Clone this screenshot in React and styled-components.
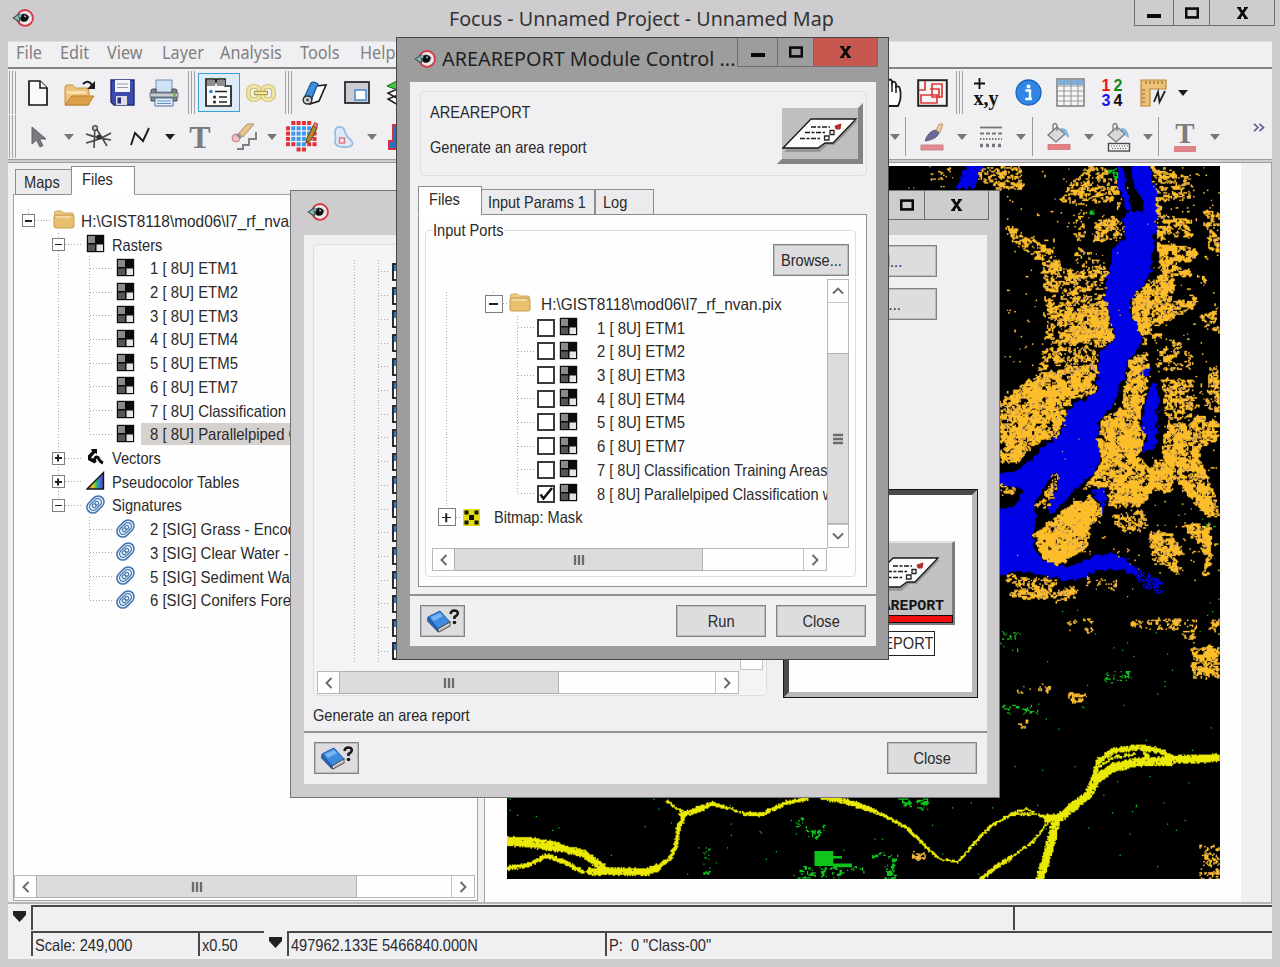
import React from 'react';
import styled, { createGlobalStyle, css } from 'styled-components';

const FACE = '#f0eff1';
const FRAME = '#cecccf';
const PITCH = 23.72;

const Global = createGlobalStyle`
  * { box-sizing: border-box; }
  body { margin: 0; background: ${FRAME}; overflow: hidden; }
  svg { display: block; flex: none; }
`;

/* ---------- basics ---------- */

const Label = styled.span`
  display: inline-block;
  white-space: pre;
  font-family: "Liberation Sans", Arial, sans-serif;
  font-size: 16.5px;
  line-height: 20px;
  color: #2a2a2a;
  transform: scaleX(${p => p.$sx || 0.885});
  transform-origin: ${p => p.$origin || 'left'} center;
`;

const UiLabel = styled(Label)`
  font-family: "Noto Sans", "Open Sans", sans-serif;
  font-size: ${p => p.$size || 17}px;
  color: ${p => p.$color || '#333'};
`;

const Desktop = styled.div`
  position: relative;
  width: 1280px;
  height: 967px;
  overflow: hidden;
  background: ${FRAME};
`;

const MainWindow = styled.div`
  width: 1280px;
  height: 967px;
  display: flex;
  flex-direction: column;
  padding: 0 8px 8px;
`;

const MainTitle = styled.header`
  height: 41px;
  flex: none;
  display: grid;
  grid-template-columns: 1fr auto 1fr;
  margin-right: -3px;
  align-items: start;
  > svg { margin: 8px 0 0 4px; }
  > span { margin-top: 9px; }
`;

const WinButtons = styled.div`
  display: flex;
  justify-self: end;
  height: ${p => p.$h}px;
  margin-right: ${p => p.$out ? -p.$out : 0}px;
  border: 1px solid #6d6d6f;
  border-top-width: 0;
`;

const WinButton = styled.div`
  width: ${p => p.$w}px;
  display: flex;
  align-items: center;
  justify-content: center;
  background: ${p => (p.$red ? '#c75850' : 'transparent')};
  & + & { border-left: 1px solid #6d6d6f; }
`;

const MenuBar = styled.nav`
  height: 28px;
  flex: none;
  display: flex;
  background: ${FACE};
  border-top: 1px solid #dddcde;
  border-bottom: 2px solid #848385;
  padding-left: 8px;
`;

const MenuItem = styled.div`
  width: ${p => p.$w}px;
`;

const Toolbars = styled.div`
  flex: none;
  background: ${FACE};
  height: 91px;
  display: flex;
  flex-direction: column;
  border-bottom: 1px solid #9b9a9c;
`;

const ToolRow = styled.div`
  display: flex;
  align-items: center;
  height: 45px;
  padding-top: ${p => p.$top || 0}px;
`;

const Slot = styled.div`
  width: ${p => p.$w}px;
  height: 39px;
  flex: none;
  display: flex;
  align-items: center;
  justify-content: center;
  ${p => p.$active && css`background: #dcebf7; border: 1px solid #3a9fd8;`}
`;

const Spring = styled.div`flex: 1;`;

const Grip = styled.div`
  width: ${p => p.$w || 9}px;
  height: 43px;
  flex: none;
  display: flex;
  justify-content: center;
  gap: 2px;
  &::before, &::after { content: ''; width: 1px; background: #a2a1a3; }
  > i { width: 1px; background: #a2a1a3; }
`;

const Divider = styled.div`
  width: 1px;
  height: 39px;
  background: #9a999b;
`;

const Body = styled.div`
  flex: 1;
  display: flex;
  min-height: 0;
  margin-top: 2px;
  background: ${FACE};
  border-top: 1px solid #9b9a9c;
`;

const SidePanel = styled.aside`
  width: 472px;
  flex: none;
  display: flex;
  flex-direction: column;
  padding: 3px 2px 1px 5px;
`;

const Tabs = styled.div`
  display: flex;
  align-items: flex-end;
  height: 29px;
  flex: none;
  position: relative;
  z-index: 1;
  margin-bottom: -1px;
  padding-left: ${p => p.$pad || 0}px;
`;

const Tab = styled.div`
  width: ${p => p.$w}px;
  height: ${p => (p.$on ? 29 : 26)}px;
  padding: 2px 0 0 ${p => p.$pl || 8}px;
  border: 1px solid #8d8c8f;
  border-bottom-color: ${p => (p.$on ? '#fff' : '#8d8c8f')};
  background: ${p => (p.$on ? '#fff' : '#ebeaec')};
  margin-left: ${p => p.$ml || 0}px;
`;

const SidePage = styled.div`
  flex: 1;
  background: #fefefe;
  border: 1px solid #a3a2a5;
  display: flex;
  flex-direction: column;
  justify-content: space-between;
  padding: 14px 0 2px;
`;

const MapPane = styled.section`
  flex: 1;
  margin-left: 4px;
  border-left: 1px solid #a3a2a5;
  border-right: 1px solid #a3a2a5;
  display: flex;
  background: #fefefe;
  padding: 3px 0 0 22px;
  > svg { margin-right: 21px; }
  &::after { content: ''; flex: 1; background: ${FACE}; margin-top: -3px; }
`;

const StatusBar = styled.footer`
  flex: none;
  height: 57px;
  background: ${FACE};
  border-top: 2px solid #b5b4b6;
  padding-top: 1px;
  display: flex;
  flex-direction: column;
  gap: 1px;
`;

const StatusRow = styled.div`display: flex; height: 25px;`;

const StatusMark = styled.div`
  width: 23px;
  flex: none;
  padding: 6px 0 0 5px;
`;

const StatusField = styled.div`
  width: ${p => (p.$w ? p.$w + 'px' : 'auto')};
  flex: ${p => (p.$w ? 'none' : 1)};
  border-left: 2px solid #48474a;
  border-top: 2px solid #48474a;
  padding: 2px 0 0 2px;
`;

/* ---------- scroll bars ---------- */

const Bar = styled.div`
  display: flex;
  flex-direction: ${p => (p.$v ? 'column' : 'row')};
  width: ${p => (p.$v ? 22 : p.$len)}px;
  height: ${p => (p.$v ? p.$len : 23)}px;
  flex: none;
  background: #fefefe;
  border: 1px solid #b9b8ba;
`;

const BarEnd = styled.div`
  flex: none;
  width: ${p => (p.$v ? 20 : 22)}px;
  height: ${p => (p.$v ? 22 : 21)}px;
  display: flex;
  align-items: center;
  justify-content: center;
  &:first-child { box-shadow: ${p => (p.$v ? '0 1px 0 #c3c2c4' : '1px 0 0 #c3c2c4')}; }
  &:last-child { box-shadow: ${p => (p.$v ? '0 -1px 0 #c3c2c4' : '-1px 0 0 #c3c2c4')}; }
`;

const Thumb = styled.div`
  flex: none;
  ${p => (p.$v ? css`height: ${p.$size}px; margin-top: ${p.$at}px;` : css`width: ${p.$size}px; margin-left: ${p.$at}px;`)}
  background: #dcdbdd;
  outline: 1px solid #b0afb2;
  display: flex;
  align-items: center;
  justify-content: center;
`;

const Chevron = ({ dir }) => (
  <svg width="12" height="12" viewBox="0 0 12 12" transform={`rotate(${{ left: 0, up: 90, right: 180, down: 270 }[dir]})`}>
    <path d="M8.5 1 L3.5 6 L8.5 11" fill="none" stroke="#6a6a6a" strokeWidth="1.9" />
  </svg>
);

const ThumbMarks = ({ v }) => (
  <svg width="12" height="12" viewBox="0 0 12 12" transform={v ? 'rotate(90)' : undefined}>
    <path d="M2 1v10M6 1v10M10 1v10" stroke="#6c6c6e" strokeWidth="2.3" />
  </svg>
);

const ScrollBar = ({ v, len, at = 0, size }) => (
  <Bar $v={v} $len={len}>
    <BarEnd $v={v}><Chevron dir={v ? 'up' : 'left'} /></BarEnd>
    <Thumb $v={v} $at={at} $size={size}><ThumbMarks v={v} /></Thumb>
    <Spring />
    <BarEnd $v={v}><Chevron dir={v ? 'down' : 'right'} /></BarEnd>
  </Bar>
);

/* ---------- icons ---------- */

const EyeIcon = ({ w = 22 }) => (
  <svg width={w} height={w * 0.9} viewBox="0 0 22 20">
    <circle cx="13" cy="10" r="8" fill="#efe6e9" stroke="#d23b44" strokeWidth="1.9" />
    <path d="M0 10 L8 4.5 L8 15.5Z" fill="#4b5a58" />
    <path d="M2 10 L7 7 L7 13Z" fill="#8fbfb0" />
    <path d="M6 8.500 Q12 2.500 17.500 8.500 Q17 12.500 12 14 Q7.500 14 6 8.500Z" fill="#4d5c66" />
    <circle cx="12.300" cy="10" r="3.700" fill="#0c0c0c" />
    <path d="M12 7.300 L14.300 8 L13 10Z" fill="#ddd" />
    <circle cx="8" cy="8" r="1.400" fill="#6fb0cc" />
  </svg>
);

const MinGlyph = () => <svg width="14" height="12" viewBox="0 0 14 12"><rect x="0" y="7" width="14" height="4" fill="#0a0a0a" /></svg>;
const MaxGlyph = () => <svg width="14" height="12" viewBox="0 0 14 12"><rect x="1.2" y="1.6" width="11.6" height="8.8" fill="none" stroke="#0a0a0a" strokeWidth="2.6" /></svg>;
const CloseGlyph = () => (
  <svg width="13" height="12" viewBox="0 0 13 12">
    <path d="M1 .8h4M8 .8h4M1 11.200h4M8 11.200h4" fill="none" stroke="#0a0a0a" strokeWidth="1.500" />
    <path d="M3 1 L10 11 M10 1 L3 11" stroke="#0a0a0a" strokeWidth="2.800" />
  </svg>
);

const NewIcon = () => (
  <svg width="20" height="26" viewBox="0 0 20 26">
    <path d="M1 1h11l7 7v17H1z" fill="#fafafa" stroke="#161616" strokeWidth="1.7" />
    <path d="M12 1v7h7" fill="#fff" stroke="#161616" strokeWidth="1.5" />
  </svg>
);
const OpenIcon = () => (
  <svg width="32" height="28" viewBox="0 0 32 28">
    <path d="M1 26V8q0-2 2-2h6l2 3h12q2 0 2 2v15z" fill="#efc27a" stroke="#c89346" />
    <path d="M3 12h19v3H3z" fill="#f9e0ae" />
    <path d="M1 26 L8 17 H30 L24 26Z" fill="#dca24b" stroke="#b98131" />
    <path d="M19 5 Q24 0 28 6" fill="none" stroke="#1a1a1a" strokeWidth="2" />
    <path d="M31 2v8h-8z" fill="#1a1a1a" />
  </svg>
);
const SaveIcon = () => (
  <svg width="25" height="27" viewBox="0 0 25 27">
    <path d="M1 1h23v25H4l-3-3z" fill="#3b4cae" stroke="#1f2a6d" strokeWidth="1.4" />
    <rect x="5" y="1" width="15" height="12" fill="#f5f5f7" />
    <path d="M7 5h11M7 8.500h11" stroke="#999" />
    <rect x="6" y="17" width="11" height="9" fill="#dcdce2" />
    <rect x="7.500" y="18.500" width="3.500" height="6" fill="#262d7c" />
  </svg>
);
const PrintIcon = () => (
  <svg width="30" height="28" viewBox="0 0 30 28">
    <path d="M7 1h16v12H7z" fill="#cfe3f5" stroke="#6c8fb3" />
    <path d="M2 12q0-2 2-2h3v4h16v-4h3q2 0 2 2v10H2z" fill="#7f868f" stroke="#454c55" />
    <path d="M1 14h28v4H1z" fill="#c9cdd2" stroke="#555c66" strokeWidth=".8" />
    <path d="M6 19h18v8H6z" fill="#e7f0f8" stroke="#4c6f96" />
    <path d="M8 22h14M8 24.500h14" stroke="#5c8fc4" />
    <circle cx="25.500" cy="16" r="1.500" fill="#6bbf3a" />
  </svg>
);
const LayoutIcon = () => (
  <svg width="28" height="29" viewBox="0 0 28 29">
    <path d="M1 28V1h9l1 3 1-3h8v7h6v20z" fill="#fbfbfb" stroke="#1c1c1c" strokeWidth="1.700" />
    <path d="M2 2h8v6H2zM12 2h8v6h-8z" fill="#8d8d8d" />
    <circle cx="6" cy="13.500" r="1.700" fill="#2080e0" />
    <path d="M10 13.500h12M14 19h8M14 24h8" stroke="#222" strokeWidth="1.700" />
    <circle cx="9.500" cy="19" r="1.500" fill="#222" /><circle cx="9.500" cy="24" r="1.500" fill="#222" />
  </svg>
);
const LinkIcon = () => (
  <svg width="30" height="18" viewBox="0 0 30 18">
    <g fill="none" stroke="#c9ba62" strokeWidth="4.600"><rect x="2.500" y="2.500" width="11" height="13" rx="4.500" /><rect x="16.500" y="2.500" width="11" height="13" rx="4.500" /></g>
    <g fill="none" stroke="#efe6a6" strokeWidth="2.800"><rect x="2.500" y="2.500" width="11" height="13" rx="4.500" /><rect x="16.500" y="2.500" width="11" height="13" rx="4.500" /></g>
    <path d="M8 9h14" stroke="#b0a04a" strokeWidth="4.400" /><path d="M9 9h12" stroke="#f1e8a8" strokeWidth="2" />
  </svg>
);
const ScrollIcon = () => (
  <svg width="26" height="24" viewBox="0 0 26 24">
    <path d="M14 5 L24 4 L17 20 L8 23Z" fill="#fff" stroke="#1a1a1a" strokeWidth="1.600" />
    <path d="M2 17 L9 2 Q12 0 16 3 L9 19Z" fill="#3b8fdc" stroke="#1d5796" strokeWidth="1.200" />
    <ellipse cx="5.500" cy="19" rx="4.300" ry="4" fill="#cfd6dc" stroke="#333" strokeWidth="1.500" />
    <circle cx="5.500" cy="19" r="1.400" fill="#444" />
  </svg>
);
const FrameIcon = () => (
  <svg width="26" height="23" viewBox="0 0 26 23">
    <rect x="1" y="1" width="24" height="21" fill="#cdccd2" stroke="#222" strokeWidth="1.700" />
    <rect x="11" y="9" width="11" height="10" fill="#fff" stroke="#4d8fce" strokeWidth="1.600" />
  </svg>
);
const LayersIcon = () => (
  <svg width="26" height="26" viewBox="0 0 26 26">
    <path d="M2 19l10 6 12-6-10-5zM2 13l10 6 12-6-10-5z" fill="#fff" stroke="#1a1a1a" strokeWidth="1.500" />
    <path d="M1 6l10-5 13 3-10 7z" fill="#3fd13a" stroke="#145c12" />
  </svg>
);
const HandIcon = () => (
  <svg width="26" height="30" viewBox="0 0 26 30">
    <path d="M6 28 L2 18 Q1 14 5 16 L7 18 V5 Q9 2 11 5 V3 Q13 0 15 3 V5 Q18 2 19 6 V9 Q22 7 23 11 Q25 20 21 28Z" fill="#fff" stroke="#1c1c1c" strokeWidth="1.800" />
    <path d="M11 5v9M15 5v9M19 8v7" stroke="#1c1c1c" strokeWidth="1.500" />
  </svg>
);
const OverlapIcon = () => (
  <svg width="31" height="28" viewBox="0 0 31 28">
    <rect x="1.200" y="1.200" width="28.600" height="25.600" fill="#f7f4f5" stroke="#262626" strokeWidth="2" />
    <path d="M8 2v9H2M15 5h10v13H15zM4 16h16v8H4zM13 10h9v9" fill="none" stroke="#dd3b3b" strokeWidth="1.700" />
  </svg>
);
const InfoIcon = () => (
  <svg width="27" height="27" viewBox="0 0 27 27">
    <circle cx="13.500" cy="13.500" r="12.500" fill="#2f86e4" stroke="#1d62b5" strokeWidth="1.300" />
    <circle cx="13.500" cy="7.500" r="2" fill="#fff" />
    <path d="M10.500 11.500h4.500v8M10.300 20h6.600" fill="none" stroke="#fff" strokeWidth="2.400" />
  </svg>
);
const TableIcon = () => (
  <svg width="29" height="29" viewBox="0 0 29 29">
    <rect x="1" y="1" width="27" height="27" fill="#f6f6f6" stroke="#7b7b7d" strokeWidth="1.500" />
    <path d="M2 2h25v5H2z" fill="#7fb0dc" />
    <path d="M1 8h27M1 13h27M1 18h27M1 23h27M8 3v25M15 3v25M22 3v25" stroke="#98979a" strokeWidth="1.100" />
  </svg>
);
const RulerIcon = () => (
  <svg width="28" height="28" viewBox="0 0 28 28">
    <path d="M1 1h25v9H10v17H1z" fill="#ecc278" stroke="#b98532" strokeWidth="1.200" />
    <path d="M6 2v3M10 2v3M14 2v3M18 2v3M22 2v3M2 11h3M2 15h3M2 19h3M2 23h3" stroke="#8f5f1b" />
    <path d="M14 23 L18 13 L19.500 23 L25 12" fill="none" stroke="#222" strokeWidth="1.800" />
  </svg>
);
const ArrowDown = ({ dark }) => <svg width="10" height="6" viewBox="0 0 10 6"><path d="M0 0h10L5 6z" fill={dark ? '#1b1b1b' : '#77767a'} /></svg>;

const PointerIcon = () => (
  <svg width="16" height="22" viewBox="0 0 16 22"><path d="M1 1v17l4.500-4 3.500 7 3-1.500L8.500 13H15z" fill="#7a797d" stroke="#656468" /></svg>
);
const CompassIcon = () => (
  <svg width="27" height="26" viewBox="0 0 27 26">
    <path d="M10 2 L9 24 M11 4 L22 22 M1 19 Q14 16 26 9 M1 10 Q12 14 26 16" fill="none" stroke="#4a494c" strokeWidth="1.600" />
    <circle cx="10" cy="4" r="2.400" fill="#ccc" stroke="#4a494c" strokeWidth="1.400" />
    <circle cx="14" cy="13" r="2.600" fill="#333" />
  </svg>
);
const PolylineIcon = () => (
  <svg width="20" height="20" viewBox="0 0 20 20"><path d="M1 18 L5 6 L13 14 L19 1" fill="none" stroke="#1e1e1e" strokeWidth="1.900" /></svg>
);
const SerifT = styled.span`
  font: bold 32px/30px "Liberation Serif", "Times New Roman", serif;
  color: #7c7b7e;
  ${p => p.$bar && css`
    font-size: 29px; line-height: 22px; height: 30px;
    border-bottom: 6px solid #df8388;
    padding: 0 1px;
  `}
`;
const EraserIcon = () => (
  <svg width="26" height="28" viewBox="0 0 26 28">
    <path d="M23 9v7h-7v6h-6v4H4" fill="none" stroke="#7f7e82" strokeWidth="1.900" transform="translate(2 0)" />
    <path d="M8 10 L16 1 H23 L12 14Z" fill="#e8c493" stroke="#b39263" />
    <circle cx="5" cy="15" r="4" fill="#f1bfc1" stroke="#c87f84" />
    <path d="M6 11l4 4" stroke="#8d8d90" strokeWidth="3" />
  </svg>
);
const MaskPencilIcon = () => {
  const n = 6, s = 5.300;
  const cells = [];
  for (let r = 0; r < n; r++) for (let c = 0; c < n; c++) {
    const corner = (r === 0 || r === n - 1) && (c === 0 || c === n - 1);
    if (corner || (r === n - 1 && (c === 1 || c === n - 2))) continue;
    const edge = r === 0 || c === 0 || r >= n - 1 || c === n - 1 || (r === n - 2 && (c < 2 || c > 3));
    cells.push(<rect key={`${r}-${c}`} x={c * s} y={r * s} width="4" height="4" fill={edge ? '#df3137' : '#3d97ea'} />);
  }
  return (
    <svg width="32" height="32" viewBox="0 0 32 32">
      {cells}
      <path d="M20 22 L21 17 L27 5 L31 7 L25 19Z" fill="#b8862c" stroke="#5d430f" />
      <path d="M27 5 L28.500 1.500 L32 3 L31 7Z" fill="#e27a80" stroke="#9c3c42" strokeWidth=".8" />
    </svg>
  );
};
const BlobIcon = () => (
  <svg width="20" height="22" viewBox="0 0 20 22">
    <path d="M4 1 Q10 0 11 6 Q12 10 17 14 Q21 20 14 21 Q3 22 1 17 Q2 12 1 7 Q1 2 4 1Z" fill="#dde9f6" stroke="#92bce4" strokeWidth="1.700" />
    <rect x="5.500" y="12" width="5" height="5" fill="#fbe6e6" stroke="#dd7a7e" strokeWidth="1.500" />
  </svg>
);
const StampIcon = () => (
  <svg width="20" height="26" viewBox="0 0 20 26"><path d="M5 1h14v24H1v-8h4z" fill="#2b6fc2" stroke="#d5343c" strokeWidth="2" /></svg>
);
const BrushIcon = () => (
  <svg width="24" height="28" viewBox="0 0 24 28">
    <path d="M16 7 L19 1 H23 L20 10Z" fill="#e8c79a" stroke="#b99566" strokeWidth=".8" />
    <path d="M5 18 Q8 9 15 7 L19 10 Q17 16 5 18Z" fill="#6a6d93" stroke="#54567c" />
    <rect x="1" y="22" width="22" height="5" fill="#e08d91" stroke="#bf6d72" strokeWidth=".7" />
  </svg>
);
const LinesIcon = () => (
  <svg width="22" height="24" viewBox="0 0 22 24">
    <path d="M0 2.500h22" stroke="#77767a" strokeWidth="1.800" />
    <path d="M0 8.500h22" stroke="#77767a" strokeWidth="1.800" strokeDasharray="4 2" />
    <path d="M0 14h22" stroke="#77767a" strokeWidth="1.800" strokeDasharray="1.500 1.500" />
    <path d="M0 20.500h22" stroke="#77767a" strokeWidth="3.600" strokeDasharray="3 3" />
  </svg>
);
const BucketIcon = ({ pattern }) => (
  <svg width="24" height="30" viewBox="0 0 24 30">
    <path d="M14 6 Q21 5 22 16 L19 14 Q19 9 13 9Z" fill="#7db9e4" />
    <path d="M1 13 L10 5 L18 12 L9 20Z" fill="#d9d8da" stroke="#79787b" strokeWidth="1.300" />
    <path d="M6 9 V3 Q8 0 10 3 V9" fill="none" stroke="#79787b" strokeWidth="1.300" />
    {pattern
      ? <g><rect x="1.500" y="21.500" width="21" height="7.500" fill="#f8f8f8" stroke="#4b4a4d" strokeWidth="1.400" /><path d="M4 24h17M5 26.500h15" stroke="#5c5b5e" strokeDasharray="1.200 1.400" /></g>
      : <rect x="1" y="22.500" width="22" height="5" fill="#e67f83" stroke="#c86a6e" strokeWidth=".7" />}
  </svg>
);
const Numbers = styled.div`
  display: grid;
  grid-template-columns: 12px 12px;
  font: bold 16px/15px "Liberation Sans", Arial, sans-serif;
  text-align: center;
`;
const Num = styled.span`color: ${p => p.$c};`;
const XyMark = styled.div`
  font: bold 20px/17px "Liberation Serif", serif;
  color: #111;
  display: flex;
  flex-direction: column;
  gap: 1px;
`;
const PlusIcon = () => (
  <svg width="11" height="11" viewBox="0 0 11 11"><path d="M5.500 0v11M0 5.500h11" stroke="#111" strokeWidth="1.800" /></svg>
);

const RasterIcon = () => (
  <svg width="19" height="19" viewBox="0 0 19 19">
    <rect x=".8" y=".8" width="17.400" height="17.400" fill="#0b0b0b" />
    <rect x="2" y="2" width="7" height="7" fill="#8a8a8a" />
    <rect x="2" y="10.500" width="7" height="6.500" fill="#555" />
    <rect x="10.500" y="10.500" width="6.500" height="6.500" fill="#e4e4e4" />
  </svg>
);
const FolderIcon = () => (
  <svg width="22" height="19" viewBox="0 0 22 19">
    <path d="M1.500 17V3q0-2 2-2h5l2 2h8.500q1.500 0 1.500 1.500V17z" fill="#eccb88" stroke="#cfa65a" />
    <path d="M1 7q0-2 2-2h16q2 0 2 2v9q0 2-2 2H3q-2 0-2-2z" fill="#e9bf70" stroke="#c79b4c" />
    <path d="M3 7h15" stroke="#f6dfae" strokeWidth="1.500" />
  </svg>
);
const VectorIcon = () => (
  <svg width="19" height="19" viewBox="0 0 19 19">
    <path d="M5 1h6v5L9 5 5 9.500 11 13l-2.500 2.500L2 12V7.500l4-4z" fill="#0b0b0b" />
    <path d="M8 13.500 Q9 7.500 12 9.500 Q14 14 17 15" fill="none" stroke="#0b0b0b" strokeWidth="3" />
  </svg>
);
const RampIcon = () => (
  <svg width="19" height="19" viewBox="0 0 19 19">
    <defs><linearGradient id="ramp"><stop offset=".1" stopColor="#e33" /><stop offset=".35" stopColor="#f0d020" /><stop offset=".55" stopColor="#35c455" /><stop offset=".75" stopColor="#3480e0" /><stop offset="1" stopColor="#6a2fa8" /></linearGradient></defs>
    <path d="M1 18 L17.500 1.500 V18Z" fill="url(#ramp)" stroke="#161616" strokeWidth="1.400" />
  </svg>
);
const SigIcon = () => (
  <svg width="21" height="21" viewBox="0 0 21 21">
    <g transform="rotate(-45 10.500 10.500)" fill="none" stroke="#3f73ad">
      <rect x=".8" y="4.600" width="19.400" height="11.800" rx="5.900" fill="#e8f1fa" strokeWidth="1.500" />
      <rect x="3.600" y="6.900" width="13.800" height="7.200" rx="3.600" strokeWidth="1.200" />
      <circle cx="8.700" cy="10.500" r="1.900" strokeWidth="1.100" /><circle cx="12.300" cy="10.500" r="1.900" strokeWidth="1.100" />
    </g>
  </svg>
);
const MaskIcon = () => (
  <svg width="17" height="17" viewBox="0 0 17 17">
    <rect width="17" height="17" fill="#e2dc12" />
    <path d="M1.500 1.500h4v4h-4zM11.500 1.500h4v4h-4zM6 6h5v5h-5zM1.500 11.500h4v4h-4zM11.500 11.500h4v4h-4z" fill="#101010" />
  </svg>
);
const BookIcon = () => (
  <svg width="34" height="24" viewBox="0 0 34 24">
    <path d="M2 8 L14 2 L24 13 L12 20Z" fill="#3d8be0" stroke="#1d5aa5" />
    <path d="M5 8 L14 4 L17 7 L8 12Z" fill="#78b5f2" />
    <path d="M2 8 L12 20 V23 L1.500 12Z" fill="#2467b8" stroke="#1b4c8a" strokeWidth=".8" />
    <path d="M12 20 L24 13 V17 L13 23Z" fill="#f4f4f4" stroke="#555" strokeWidth="1.100" />
    <path d="M14 21l9-5" stroke="#888" strokeWidth=".8" />
    <path d="M24.500 5 Q25 1.500 28.300 1.500 Q32 1.600 31.800 4.500 Q31.500 6.500 28.500 8 V10" fill="none" stroke="#1a1a1a" strokeWidth="2.600" />
    <circle cx="28.500" cy="13.500" r="1.800" fill="#1a1a1a" />
  </svg>
);
const LetterSheet = () => (
  <g>
    <path d="M6 47 L33 16 H79 L68 28 L56 40 H49 L41 47Z" fill="#777" opacity=".55" transform="translate(1.500 2)" />
    <path d="M6 45 L34 16 H79 L56 40 H48 L41 45Z" fill="#fdfdfd" stroke="#181818" strokeWidth="1.300" />
    <path d="M34 24h19M28 29.500h20M23 35.500h20" stroke="#1a1a1a" strokeWidth="1.700" strokeDasharray="5 1.500 3 1.500" />
    <path d="M53 27.500h4v4h-4zM47.500 33h4.500v4h-4.500z" fill="#fff" stroke="#222" strokeWidth="1.300" />
    <path d="M58 23l6-2-1 5h-4z" fill="#b32d2d" stroke="#b32d2d" />
  </g>
);
const ReportButtonIcon = () => (
  <svg width="86" height="62" viewBox="0 0 86 62">
    <path d="M5 5 H86 V61 H0 L5 56Z" fill="#bfbec0" />
    <path d="M86 0 V61 H0 L5 56 H81 V5Z" fill="#838284" />
    <LetterSheet />
  </svg>
);

/* ---------- buttons ---------- */

const PushButton = styled.div`
  width: ${p => p.$w}px;
  height: ${p => p.$h || 32}px;
  flex: none;
  background: #dddcde;
  border: 1px solid #838284;
  box-shadow: inset 0 0 0 1px #bbbabc;
  display: flex;
  align-items: center;
  justify-content: center;
`;

const Push = ({ w, h, children }) => (
  <PushButton $w={w} $h={h}>
    {typeof children === 'string' ? <Label $origin="center">{children}</Label> : children}
  </PushButton>
);

/* ---------- tree ---------- */

const dotsV = 'repeating-linear-gradient(to bottom, #a9a8aa 0 1px, transparent 1px 3px)';
const dotsH = 'repeating-linear-gradient(to right, #a9a8aa 0 1px, transparent 1px 3px)';

const Row = styled.div`
  display: flex;
  align-items: center;
  height: ${PITCH}px;
  width: 100%;
`;

const Guide = styled.div`
  width: ${p => p.$w}px;
  height: 100%;
  flex: none;
  display: flex;
  align-items: center;
  justify-content: center;
  background-repeat: no-repeat;
  background-image: ${p => (p.$v ? dotsV : 'none')}, ${p => (p.$h ? dotsH : 'none')};
  background-position: ${p => p.$w / 2 - 0.5}px 0, 100% 50%;
  background-size: 1px ${p => (p.$v === 'full' ? '100%' : '50%')}, 50% 1px;
`;

const Lead = styled.div`
  width: ${p => p.$w}px;
  height: 1px;
  flex: none;
  background: ${dotsH};
  margin-right: ${p => p.$gap ?? 2}px;
`;

const Expander = styled.div`
  width: ${p => p.$s}px;
  height: ${p => p.$s}px;
  background: #fff;
  border: 1px solid #7d7c7e;
  display: grid;
  place-items: center;
  &::before, &::after {
    content: '';
    grid-area: 1 / 1;
    width: ${p => p.$s * 0.5}px;
    height: 1.500px;
    background: #222;
  }
  &::after { transform: rotate(90deg); display: ${p => (p.$open ? 'none' : 'block')}; }
`;

const IconCell = styled.div`
  width: ${p => p.$w}px;
  flex: none;
  display: flex;
  justify-content: center;
  padding-bottom: ${p => p.$up || 0}px;
`;

const RowText = styled.div`
  flex: 1;
  height: 22px;
  padding: 1px 0 0 ${p => p.$pl}px;
  margin-left: ${p => p.$ml || 0}px;
  background: ${p => (p.$sel ? '#d5d1cf' : 'transparent')};
  overflow: hidden;
`;

const rasters = [
  '1 [ 8U] ETM1', '2 [ 8U] ETM2', '3 [ 8U] ETM3', '4 [ 8U] ETM4', '5 [ 8U] ETM5', '6 [ 8U] ETM7',
  '7 [ 8U] Classification Training Areas', '8 [ 8U] Parallelpiped Classification with',
];
const signatures = ['2 [SIG] Grass - Encoded', '3 [SIG] Clear Water - E', '5 [SIG] Sediment Water', '6 [SIG] Conifers Forest'];
const TREE_SX = 0.905;

const Branch = ({ icon, text, open, line }) => (
  <Row>
    <Guide $w={29} />
    <Guide $w={31} $v={line} $h><Expander $s={13} $open={open} /></Guide>
    <Lead $w={9} />
    <IconCell $w={20} $up={2}>{icon}</IconCell>
    <RowText $pl={7}><Label>{text}</Label></RowText>
  </Row>
);

const Leaf = ({ icon, text, trunk, last, selected }) => (
  <Row>
    <Guide $w={29} />
    <Guide $w={31} $v={trunk ? 'full' : undefined} />
    <Guide $w={31} $v={last ? 'top' : 'full'} $h />
    <Lead $w={9} />
    <IconCell $w={19} $up={2}>{icon}</IconCell>
    <RowText $ml={6} $pl={9} $sel={selected}><Label $sx={TREE_SX}>{text}</Label></RowText>
  </Row>
);

const FilesTree = () => (
  <div>
    <Row>
      <Guide $w={29} $v="top" $h><Expander $s={13} $open /></Guide>
      <Lead $w={9} $gap={1} />
      <IconCell $w={22} $up={2}><FolderIcon /></IconCell>
      <RowText $pl={6}><Label $sx={0.935}>{'H:\\GIST8118\\mod06\\l7_rf_nvan.pix'}</Label></RowText>
    </Row>
    <Branch icon={<RasterIcon />} text="Rasters" open line="full" />
    {rasters.map((t, i) => <Leaf key={t} icon={<RasterIcon />} text={t} trunk last={i === 7} selected={i === 7} />)}
    <Branch icon={<VectorIcon />} text="Vectors" line="full" />
    <Branch icon={<RampIcon />} text="Pseudocolor Tables" line="full" />
    <Branch icon={<SigIcon />} text="Signatures" open line="top" />
    {signatures.map((t, i) => <Leaf key={t} icon={<SigIcon />} text={t} last={i === 3} />)}
  </div>
);

/* ---------- classified map ---------- */

const pts = (s, ox, oy, kx, ky) => s.trim().split(/\s+/).map(p => {
  const [x, y] = p.split(',').map(Number);
  return [ox + x / kx, oy + y / ky];
});
const north = s => pts(s, 960, 160, 3, 3);
const south = s => pts(s, 480, 590, 1.96, 3);
const box = (a, b, c, d) => south(`${a},${b} ${c},${b} ${c},${d} ${a},${d}`);

const hash = (x, y) => {
  let h = (Math.imul(x, 374761393) + Math.imul(y, 668265263)) | 0;
  h = Math.imul(h ^ (h >>> 13), 1274126177);
  return ((h ^ (h >>> 16)) >>> 0) / 4294967296;
};
const noise = (x, y) => {
  const xi = Math.floor(x), yi = Math.floor(y), fx = x - xi, fy = y - yi;
  const u = fx * fx * (3 - 2 * fx), v = fy * fy * (3 - 2 * fy);
  return (hash(xi, yi) * (1 - u) + hash(xi + 1, yi) * u) * (1 - v) + (hash(xi, yi + 1) * (1 - u) + hash(xi + 1, yi + 1) * u) * v;
};
const inside = (poly, x, y) => {
  let c = false;
  for (let i = 0, j = poly.length - 1; i < poly.length; j = i++) {
    const [xi, yi] = poly[i], [xj, yj] = poly[j];
    if ((yi > y) !== (yj > y) && x < ((xj - xi) * (y - yi)) / (yj - yi) + xi) c = !c;
  }
  return c;
};
const region = (d, poly) => ({
  d, poly,
  b: [Math.min(...poly.map(p => p[0])) - 3, Math.min(...poly.map(p => p[1])) - 3, Math.max(...poly.map(p => p[0])) + 3, Math.max(...poly.map(p => p[1])) + 3],
});

const water = [
  region(1, north('508,10 562,10 580,70 590,110 585,200 575,260 570,340 545,380 510,410 512,470 530,490 543,550 510,590 497,640 470,690 455,740 415,780 410,860 420,900 390,940 340,990 280,1055 262,1050 285,980 300,950 285,935 250,980 220,1020 225,1060 218,1100 218,1160 245,1200 300,1215 350,1215 400,1190 440,1175 490,1195 520,1215 530,1245 470,1225 400,1235 350,1260 270,1250 200,1230 120,1242 90,1242 90,1050 160,1040 190,990 120,970 90,970 90,940 180,925 240,865 300,820 320,760 340,730 410,700 415,600 420,570 465,545 460,510 440,450 430,390 445,340 455,270 490,230 490,160 550,155 545,120 520,60')),
  region(1, north('480,10 495,60 500,100 518,155 502,158 485,100 468,70 475,10')),
  region(0.98, north('20,10 72,10 40,80 -10,85')),
  region(0.97, north('570,670 592,680 590,780 585,860 540,875 560,830 540,800 555,740')),
  region(0.9, north('398,985 430,985 435,1030 425,1055 410,1015')),
  region(0.8, north('540,630 565,620 570,640 550,655')),
  region(0.5, north('500,1210 560,1240 605,1260 600,1300 560,1280 520,1245')),
];
const forest = [
  region(0.5, north('60,18 180,18 190,80 110,90 60,60')),
  region(0.2, north('-90,30 -30,20 -20,80 -90,80')),
  region(0.5, north('340,60 380,20 430,20 470,60 480,140 470,150 470,120 350,130 290,120')),
  region(0.35, north('340,130 380,130 370,250 340,240')),
  region(0.6, north('400,190 450,165 490,190 480,225 400,250')),
  region(0.55, north('140,190 200,230 280,265 310,330 440,330 445,380 330,405 250,390 240,300 150,240')),
  region(0.3, north('340,250 380,270 440,310 440,340 350,320')),
  region(0.52, north('250,410 430,400 450,480 460,540 410,570 410,650 240,640 240,580 260,480')),
  region(0.85, north('330,460 430,430 455,540 330,545')),
  region(0.8, north('240,640 410,610 405,700 330,720 310,790 290,830 220,850 170,910 120,900 120,720')),
  region(0.5, north('572,18 610,25 690,50 705,110 600,130 600,160 690,180 700,230 620,230 590,240')),
  region(0.68, north('585,250 700,262 715,290 640,310 740,360 740,375 700,350 600,345')),
  region(0.72, north('600,345 640,345 635,420 710,415 700,440 620,480 580,500 545,560 545,520 515,470 515,410 570,360')),
  region(0.4, north('560,510 650,540 700,590 690,620 600,640')),
  region(0.5, north('600,655 700,655 700,770 620,790 610,720')),
  region(0.8, north('610,790 690,790 720,760 780,790 780,830 720,860 715,890 750,980 780,1050 780,1070 740,1070 620,930 608,880')),
  region(0.84, north('510,600 560,570 560,660 550,740 530,790 555,800 545,860 530,880 570,930 585,900 610,900 640,960 630,1000 580,980 540,1040 440,1040 450,980 370,980 430,900 410,860 420,780 480,740')),
  region(0.97, north('220,1120 300,1055 390,1005 430,1050 385,1100 385,1160 290,1215 240,1190')),
  region(0.5, north('225,1040 290,940 310,940 260,1040')),
  region(0.5, north('460,1060 550,1050 565,1100 500,1120 460,1090')),
  region(0.65, north('570,1110 640,1120 670,1180 640,1190 665,1250 570,1195')),
  region(0.85, north('665,1090 750,1090 752,1190 735,1250 725,1240 740,1190 700,1130')),
  region(0.5, north('730,150 790,160 790,290 740,260')),
  region(0.38, north('720,470 790,430 790,520 720,510')),
  region(0.5, north('750,620 790,620 790,760 730,740')),
  region(0.6, north('120,970 165,980 165,1000 120,1000')),
  region(0.48, north('120,1240 300,1262 360,1290 300,1330 180,1290')),
  region(0.4, north('380,1245 420,1250 480,1272 460,1285 380,1270')),
  region(0.7, box(1040, -5, 1165, 22)),
  region(0.3, box(1150, 80, 1200, 122)),
  region(0.35, box(1270, 85, 1405, 115)),
  region(0.45, box(1375, 118, 1402, 155)),
  region(0.66, box(1395, 170, 1456, 262)),
  region(0.45, box(1430, 85, 1456, 125)),
  region(0.25, box(1055, 282, 1115, 305)),
  region(0.45, box(1155, 308, 1185, 332)),
  region(0.4, box(1058, 390, 1072, 415)),
  region(0.3, box(1412, 765, 1456, 850)),
  region(0.6, box(1400, 845, 1456, 872)),
  region(0.4, box(848, 780, 870, 810)),
];
const grass = [
  region(0.3, box(1020, 125, 1055, 180)),
  region(0.4, box(1225, 240, 1275, 275)),
  region(0.25, box(1022, 340, 1095, 370)),
  region(0.3, box(1160, 340, 1190, 350)),
  region(0.4, box(820, 628, 882, 656)),
  region(1, box(655, 782, 690, 828)),
  region(1, box(692, 795, 708, 803)),
  region(1, box(692, 820, 728, 829)),
  region(0.4, box(640, 706, 682, 742)),
  region(0.4, box(622, 830, 750, 864)),
  region(0.8, box(765, 788, 790, 797)),
  region(0.45, box(795, 795, 815, 866)),
  region(0.25, box(435, 770, 455, 868)),
  region(0.2, box(618, 680, 640, 740)),
  region(0.5, north('440,25 470,30 470,60 440,50')),
  region(0.5, north('390,145 410,145 410,160 390,160')),
  region(0.4, north('725,1075 770,1090 770,1105 730,1095')),
];
const river = (w, s) => ({ w, p: south(s) });
const channels = [
  river(9.500, '40,752 95,754 150,770'),
  river(7, '150,770 200,787 240,832'),
  river(4, '53,832 90,825 130,795 165,815 200,842'),
  river(7, '215,843 260,842 325,845 345,832'),
  river(3.800, '345,832 370,805 382,770 388,710 400,675'),
  river(5.500, '395,672 415,665 435,650'),
  river(4, '435,650 455,640 480,650'),
  river(1.700, '480,650 520,670'),
  river(3.500, '520,670 550,672 580,650 600,636 640,624'),
  river(5, '670,620 720,634 770,660'),
  river(2.600, '770,660 835,710 880,780'),
  river(1.500, '880,780 900,805 935,815 955,780'),
  river(2.400, '955,780 1000,705 1040,672 1085,670 1120,684'),
  river(1.400, '1040,668 1070,655 1085,668'),
  river(1.800, '1115,690 1085,750 1040,800'),
  river(3.600, '1040,800 1005,835 980,866'),
  river(8, '1095,872 1105,820 1120,740 1128,695'),
  river(8, '1112,684 1135,682 1160,650 1190,615'),
  river(8.500, '1195,600 1207,565 1242,530 1290,514 1350,512'),
  river(5, '1200,575 1212,510 1240,480 1290,470 1330,480 1355,500'),
  river(8, '1350,507 1400,505 1456,500'),
  river(4, '1300,480 1310,510'),
  river(2, '1215,525 1240,500 1280,492'),
  river(2, '365,630 380,650 405,668'),
];
const segDist = (p, x, y) => {
  let best = 1e9;
  for (let i = 1; i < p.length; i++) {
    const [ax, ay] = p[i - 1], [bx, by] = p[i];
    const dx = bx - ax, dy = by - ay;
    const t = Math.max(0, Math.min(1, ((x - ax) * dx + (y - ay) * dy) / (dx * dx + dy * dy)));
    best = Math.min(best, Math.hypot(x - ax - t * dx, y - ay - t * dy));
  }
  return best;
};

const STEP = 1.25;
const classify = (x, y, i, j) => {
  const grain = hash(i, j);
  if (y > 740) {
    for (const c of channels) if (segDist(c.p, x, y) < c.w / 2 + (grain - 0.5) * 1.8) return grain > 0.985 ? null : 'yellow';
  }
  const jx = x + (noise(x / 3, y / 3) - 0.5) * 5, jy = y + (noise(x / 3 + 90, y / 3) - 0.5) * 5;
  const field = noise(x / 6, y / 4) * 0.34 + noise(x / 2.3 + 40, y / 1.9) * 0.46 + grain * 0.2;
  const hit = r => jx > r.b[0] && jx < r.b[2] && jy > r.b[1] && jy < r.b[3] && inside(r.poly, jx, jy);
  for (const r of water) if (hit(r) && grain < r.d - 0.004) return 'blue';
  for (const r of grass) if ((r.d === 1 ? inside(r.poly, x, y) : hit(r) && field < r.d * 0.4 + 0.26)) return 'green';
  let near = false;
  for (const r of forest) if (hit(r)) {
    near = true;
    const limit = 0.27 + r.d * 0.44;
    if (field < limit) return field > limit - 0.04 && grain > 0.4 ? 'tan' : 'orange';
  }
  if (!near && grain > 0.9985) return y > 600 ? 'green' : 'tan';
  if (!near && y < 580 && x > 1005 && field < 0.2) return 'orange';
  return null;
};

const buildMap = () => {
  const out = { blue: '', yellow: '', green: '', orange: '', tan: '' };
  for (let j = 0; j * STEP < 713; j++) {
    const y = 166 + j * STEP;
    let run = null, start = 0;
    const i0 = y < 192 || y > 795 ? 0 : Math.floor(490 / STEP);
    const end = Math.floor(713 / STEP);
    for (let i = i0; i <= end; i++) {
      const c = i < end ? classify(507 + i * STEP, y, i, j) : null;
      if (c !== run) {
        if (run) out[run] += `M${start * STEP} ${j * STEP}h${(i - start) * STEP}v${STEP}h${(start - i) * STEP}z`;
        run = c;
        start = i;
      }
    }
  }
  return out;
};
const mapPaths = buildMap();

const ClassMap = () => (
  <svg width="713" height="713" viewBox="0 0 713 713">
    <rect width="713" height="713" fill="#000" />
    <rect x="493" width="220" height="0" />
    <path d={mapPaths.blue} fill="#0202e6" stroke="#0202e6" strokeWidth=".3" />
    <path d={mapPaths.orange} fill="#fdbd2b" stroke="#fdbd2b" strokeWidth=".3" />
    <path d={mapPaths.tan} fill="#dba878" />
    <path d={mapPaths.green} fill="#10c41c" />
    <path d={mapPaths.yellow} fill="#eaea08" stroke="#eaea08" strokeWidth=".3" />
  </svg>
);

/* ---------- dialogs ---------- */

const Dialog = styled.div`
  position: absolute;
  left: ${p => p.$x}px;
  top: ${p => p.$y}px;
  width: ${p => p.$w}px;
  height: ${p => p.$h}px;
  background: ${p => p.$bg};
  border: 1px solid ${p => p.$edge};
  padding: 0 12px 13px 13px;
  display: flex;
  flex-direction: column;
`;

const DialogTitle = styled.div`
  height: 44px;
  flex: none;
  display: flex;
  > svg { margin-top: ${p => p.$iconTop}px; margin-left: ${p => p.$iconLeft || 0}px; }
`;

const DialogFace = styled.div`
  flex: 1;
  background: ${FACE};
  display: flex;
  flex-direction: column;
  min-height: 0;
`;

const DialogFooter = styled.div`
  border-top: 2px solid #929193;
  display: flex;
  gap: 10px;
  padding: 9px 10px 0 10px;
  height: ${p => p.$h}px;
  flex: none;
`;

const LibraryBody = styled.div`
  flex: 1;
  display: flex;
  justify-content: space-between;
  padding: 9px 9px 0 9px;
`;

const LibraryLeft = styled.div`
  width: 454px;
  display: flex;
  flex-direction: column;
`;

const LibraryTree = styled.div`
  height: 452px;
  border: 1px solid #dfdee1;
  border-radius: 5px;
  background: #f4f3f5;
  padding: 15px 3px 1px;
  display: flex;
  flex-direction: column;
`;

const LibraryRows = styled.div`
  height: 410px;
  overflow: hidden;
  padding-left: 25px;
`;

const AlgoIcon = () => (
  <svg width="16" height="18" viewBox="0 0 16 18">
    <rect x="1" y="1" width="14" height="16" fill="#fff" stroke="#171717" strokeWidth="1.800" />
    <path d="M2 2h12v6H2z" fill="#2f7cd0" />
  </svg>
);

const ScrollLine = styled.div`
  display: flex;
  align-items: flex-end;
`;

const Corner = styled.div`
  width: 23px;
  height: 12px;
  margin: -12px 0 0 auto;
  background: #fefefe;
  border: 1px solid #c3c2c4;
  border-top: 0;
`;

const Hint = styled.div`padding-top: 9px;`;

const LibraryRight = styled.div`
  width: 195px;
  display: flex;
  flex-direction: column;
  align-items: flex-end;
`;

const SideButtons = styled.div`
  display: flex;
  flex-direction: column;
  gap: 11px;
  padding: 1px 41px 0 0;
  height: 245px;
`;

const Preview = styled.div`
  width: 195px;
  height: 209px;
  outline: 1px solid #161616;
  outline-offset: -1px;
  border: 6px solid;
  border-color: #4a494c #b8b7b9 #b8b7b9 #4a494c;
  background: #fefefe;
  display: flex;
  flex-direction: column;
  align-items: flex-end;
`;

const Tile = styled.div`
  margin: 46px 17px 0 0;
  width: 96px;
  height: 84px;
  flex: none;
  background: #c2c1c3;
  border-right: 3px solid #7c7b7d;
  border-bottom: 2px solid #7c7b7d;
  border-top: 2px solid #e1e0e2;
  display: flex;
  flex-direction: column;
  align-items: flex-end;
`;

const TileName = styled.span`
  font: bold 15px/17px "Liberation Mono", monospace;
  letter-spacing: -0.1px;
  color: #161616;
  padding-right: 8px;
  white-space: pre;
`;

const TileBar = styled.div`
  width: 84px;
  height: 8px;
  flex: none;
  margin-right: -1px;
  background: #f20d0d;
  border: 1px solid #1a0a0a;
`;

const TileCaption = styled.div`
  display: flex;
  justify-content: flex-end;
  margin: 6px 37px 0 0;
  border: 1px solid #222;
  background: #fff;
  height: 25px;
  width: 118px;
  padding: 1px 1px 0 0;
`;

const LibraryDialog = () => (
  <Dialog $x={290} $y={190} $w={710} $h={608} $bg={FRAME} $edge="#747375">
    <DialogTitle $iconTop={11} $iconLeft={3}>
      <EyeIcon />
      <Spring />
      <WinButtons $h={29} $out={2}>
        <WinButton $w={40}><MinGlyph /></WinButton>
        <WinButton $w={36}><MaxGlyph /></WinButton>
        <WinButton $w={64}><CloseGlyph /></WinButton>
      </WinButtons>
    </DialogTitle>
    <DialogFace>
      <LibraryBody>
        <LibraryLeft>
          <LibraryTree>
            <LibraryRows>
              {Array.from({ length: 17 }, (_, i) => (
                <Row key={i}>
                  <Guide $w={24} $v="full" />
                  <Guide $w={24} $v="full" $h />
                  <IconCell $w={20}><AlgoIcon /></IconCell>
                </Row>
              ))}
            </LibraryRows>
            <Corner />
            <Spring />
            <ScrollLine><ScrollBar len={422} size={218} /></ScrollLine>
          </LibraryTree>
          <Hint><Label>Generate an area report</Label></Hint>
        </LibraryLeft>
        <LibraryRight>
          <SideButtons>
            <Push w={110}>Find...</Push>
            <Push w={110}>Edit...</Push>
          </SideButtons>
          <Preview>
            <Tile>
              <svg width="80" height="55" viewBox="13 1 80 55"><LetterSheet /></svg>
              <TileName>AREAREPORT</TileName>
              <TileBar />
            </Tile>
            <TileCaption><Label $origin="right">AREAREPORT</Label></TileCaption>
          </Preview>
        </LibraryRight>
      </LibraryBody>
      <DialogFooter $h={53}>
        <Push w={45}><BookIcon /></Push>
        <Spring />
        <Push w={90}>Close</Push>
      </DialogFooter>
    </DialogFace>
  </Dialog>
);

const TitleText = styled(UiLabel)`
  margin: 11px 0 0 6px;
  width: 288px;
`;

const ModuleHead = styled.div`
  margin: 9px 9px 0 10px;
  height: 85px;
  border: 1px solid #dedde0;
  border-radius: 4px;
  display: flex;
  justify-content: space-between;
  padding: 10px 3px 0 9px;
  > svg { margin-top: 1px; }
`;

const HeadText = styled.div`
  display: flex;
  flex-direction: column;
  gap: 15px;
`;

const ModuleTabs = styled(Tabs)`
  margin: 10px 9px -1px 8px;
`;

const ModulePage = styled.div`
  margin: 0 9px 0 8px;
  height: 373px;
  background: #fefefe;
  border: 1px solid #919093;
  padding: 15px 10px 0 6px;
`;

const GroupBox = styled.fieldset`
  position: relative;
  margin: 0;
  min-width: 0;
  height: 347px;
  border: 1px solid #dcdfe4;
  border-radius: 4px;
  padding: 0 6px 5px 6px;
  display: flex;
  flex-direction: column;
`;

const Legend = styled.div`
  margin: -11px 0 0 1px;
  height: 21px;
  > span { background: #fefefe; }
`;

const BrowseLine = styled.div`
  display: flex;
  justify-content: flex-end;
  padding: 4px 0 0 0;
  height: 40px;
`;

const PortArea = styled.div`
  display: grid;
  grid-template-columns: 395px 22px;
  grid-template-rows: 269px 23px;
`;

const PortTree = styled.div`
  overflow: hidden;
  padding-top: 13px;
`;

const CheckBox = styled.div`
  width: 18px;
  height: 18px;
  flex: none;
  border: 2px solid #3a3a3a;
  background: #fff;
  margin-right: 4px;
`;

const CheckMark = () => (
  <svg width="14" height="14" viewBox="0 0 14 14"><path d="M1.500 7.500 L4.500 11.500 L13 1" fill="none" stroke="#0d0d0d" strokeWidth="2.500" /></svg>
);

const ModuleDialog = () => (
  <Dialog $x={396} $y={37} $w={493} $h={623} $bg="#9e9d9e" $edge="#454446">
    <DialogTitle $iconTop={11} $iconLeft={4}>
      <EyeIcon />
      <TitleText $size={20} $color="#1f1f1f" $sx={0.99}>AREAREPORT Module Control ...</TitleText>
      <Spring />
      <WinButtons $h={29} $out={2}>
        <WinButton $w={39}><MinGlyph /></WinButton>
        <WinButton $w={36}><MaxGlyph /></WinButton>
        <WinButton $w={64} $red><CloseGlyph /></WinButton>
      </WinButtons>
    </DialogTitle>
    <DialogFace>
      <ModuleHead>
        <HeadText>
          <Label>AREAREPORT</Label>
          <Label>Generate an area report</Label>
        </HeadText>
        <ReportButtonIcon />
      </ModuleHead>
      <ModuleTabs>
        <Tab $w={64} $on $pl={10}><Label>Files</Label></Tab>
        <Tab $w={114} $ml={-1} $pl={6}><Label $sx={0.875}>Input Params 1</Label></Tab>
        <Tab $w={59} $pl={7}><Label>Log</Label></Tab>
      </ModuleTabs>
      <ModulePage>
        <GroupBox>
          <Legend><Label>Input Ports</Label></Legend>
          <BrowseLine><Push w={76}>Browse...</Push></BrowseLine>
          <PortArea>
            <PortTree>
              <Row>
                <Guide $w={29} $v="full" />
                <Guide $w={18} />
                <Guide $w={29} $v="top" $h><Expander $s={18} $open /></Guide>
                <IconCell $w={24} $up={2}><FolderIcon /></IconCell>
                <RowText $pl={9}><Label $sx={0.935}>{'H:\\GIST8118\\mod06\\l7_rf_nvan.pix'}</Label></RowText>
              </Row>
              {rasters.map((t, i) => (
                <Row key={t}>
                  <Guide $w={29} $v="full" />
                  <Guide $w={41} />
                  <Guide $w={31} $v={i === 7 ? 'top' : 'full'} $h />
                  <Lead $w={1} $gap={3} />
                  <CheckBox>{i === 7 && <CheckMark />}</CheckBox>
                  <IconCell $w={19} $up={2}><RasterIcon /></IconCell>
                  <RowText $pl={19}><Label $sx={i < 6 ? TREE_SX : 0.885}>{t}</Label></RowText>
                </Row>
              ))}
              <Row>
                <Guide $w={29} $v="top" $h><Expander $s={18} /></Guide>
                <IconCell $w={20}><MaskIcon /></IconCell>
                <RowText $pl={13}><Label>Bitmap: Mask</Label></RowText>
              </Row>
            </PortTree>
            <ScrollBar v len={269} at={52} size={169} />
            <ScrollBar len={395} size={247} />
          </PortArea>
        </GroupBox>
      </ModulePage>
      <Spring />
      <DialogFooter $h={52}>
        <Push w={45}><BookIcon /></Push>
        <Spring />
        <Push w={90}>Run</Push>
        <Push w={90}>Close</Push>
      </DialogFooter>
    </DialogFace>
  </Dialog>
);

/* ---------- toolbars ---------- */

const Tool = ({ w = 42, active, children }) => <Slot $w={w} $active={active}>{children}</Slot>;
const Handle = ({ w }) => <Grip $w={w}><i /></Grip>;

const menu = [['File', 44], ['Edit', 47], ['View', 55], ['Layer', 58], ['Analysis', 80], ['Tools', 60], ['Help', 50]];

const StatusArrow = () => (
  <svg width="13" height="11" viewBox="0 0 13 11"><path d="M0 0h13v4L6.500 11 0 4z" fill="#222" /></svg>
);

const OverflowIcon = () => (
  <svg width="12" height="9" viewBox="0 0 12 9">
    <path d="M1 .8 L5 4.500 L1 8.200 M6.500 .8 L10.500 4.500 L6.500 8.200" fill="none" stroke="#5a5a92" strokeWidth="1.600" />
  </svg>
);

const Overflow = styled.div`
  flex: 1;
  align-self: flex-start;
  padding: 6px 0 0 33px;
`;

export default function App() {
  return (
    <Desktop>
      <Global />
      <MainWindow>
        <MainTitle>
          <EyeIcon />
          <UiLabel $size={20} $origin="center" $sx={0.985}>Focus - Unnamed Project - Unnamed Map</UiLabel>
          <WinButtons $h={26}>
            <WinButton $w={38}><MinGlyph /></WinButton>
            <WinButton $w={36}><MaxGlyph /></WinButton>
            <WinButton $w={65}><CloseGlyph /></WinButton>
          </WinButtons>
        </MainTitle>
        <MenuBar>
          {menu.map(([t, w]) => (
            <MenuItem key={t} $w={w}><UiLabel $size={17.5} $color="#807f82" $sx={0.93}>{t}</UiLabel></MenuItem>
          ))}
        </MenuBar>
        <Toolbars>
          <ToolRow $top={2}>
            <Handle w={9} />
            <Tool><NewIcon /></Tool>
            <Tool><OpenIcon /></Tool>
            <Tool><SaveIcon /></Tool>
            <Tool><PrintIcon /></Tool>
            <Handle w={13} />
            <Tool active><LayoutIcon /></Tool>
            <Tool><LinkIcon /></Tool>
            <Handle w={12} />
            <Tool><ScrollIcon /></Tool>
            <Tool><FrameIcon /></Tool>
            <Tool><LayersIcon /></Tool>
            <Spring />
            <Tool><HandIcon /></Tool>
            <Tool><OverlapIcon /></Tool>
            <Handle w={12} />
            <Tool><XyMark><PlusIcon />x,y</XyMark></Tool>
            <Tool><InfoIcon /></Tool>
            <Tool><TableIcon /></Tool>
            <Tool>
              <Numbers><Num $c="#f01010">1</Num><Num $c="#0c8a1c">2</Num><Num $c="#1616e8">3</Num><Num $c="#111">4</Num></Numbers>
            </Tool>
            <Tool><RulerIcon /></Tool>
            <Tool w={16}><ArrowDown dark /></Tool>
            <Tool w={81} />
          </ToolRow>
          <ToolRow>
            <Handle w={9} />
            <Tool w={43}><PointerIcon /></Tool>
            <Tool w={18}><ArrowDown /></Tool>
            <Tool w={41}><CompassIcon /></Tool>
            <Tool><PolylineIcon /></Tool>
            <Tool w={18}><ArrowDown dark /></Tool>
            <Tool><SerifT>T</SerifT></Tool>
            <Tool w={46}><EraserIcon /></Tool>
            <Tool w={10}><ArrowDown /></Tool>
            <Tool w={50}><MaskPencilIcon /></Tool>
            <Tool w={34}><BlobIcon /></Tool>
            <Tool w={22}><ArrowDown /></Tool>
            <Tool w={30}><StampIcon /></Tool>
            <Spring />
            <Tool w={18}><ArrowDown /></Tool>
            <Tool w={2}><Divider /></Tool>
            <Tool w={52}><BrushIcon /></Tool>
            <Tool w={8}><ArrowDown /></Tool>
            <Tool w={50}><LinesIcon /></Tool>
            <Tool w={10}><ArrowDown /></Tool>
            <Tool w={12}><Divider /></Tool>
            <Tool><BucketIcon /></Tool>
            <Tool w={18}><ArrowDown /></Tool>
            <Tool><BucketIcon pattern /></Tool>
            <Tool w={16}><ArrowDown /></Tool>
            <Tool w={4}><Divider /></Tool>
            <Tool w={50}><SerifT $bar>T</SerifT></Tool>
            <Tool w={10}><ArrowDown /></Tool>
            <Tool w={52}><Overflow><OverflowIcon /></Overflow></Tool>
          </ToolRow>
        </Toolbars>
        <Body>
          <SidePanel>
            <Tabs $pad={2}>
              <Tab $w={57} $pl={8}><Label>Maps</Label></Tab>
              <Tab $w={64} $ml={-1} $on $pl={10}><Label>Files</Label></Tab>
            </Tabs>
            <SidePage>
              <FilesTree />
              <ScrollBar len={461} size={319} />
            </SidePage>
          </SidePanel>
          <MapPane><ClassMap /></MapPane>
        </Body>
        <StatusBar>
          <StatusRow>
            <StatusMark><StatusArrow /></StatusMark>
            <StatusField $w={982} />
            <StatusField />
          </StatusRow>
          <StatusRow>
            <StatusMark />
            <StatusField $w={167}><Label>Scale: 249,000</Label></StatusField>
            <StatusField $w={66}><Label>x0.50</Label></StatusField>
            <StatusMark><StatusArrow /></StatusMark>
            <StatusField $w={318}><Label>497962.133E 5466840.000N</Label></StatusField>
            <StatusField><Label>{'P:  0 "Class-00"'}</Label></StatusField>
          </StatusRow>
        </StatusBar>
      </MainWindow>
      <LibraryDialog />
      <ModuleDialog />
    </Desktop>
  );
}
